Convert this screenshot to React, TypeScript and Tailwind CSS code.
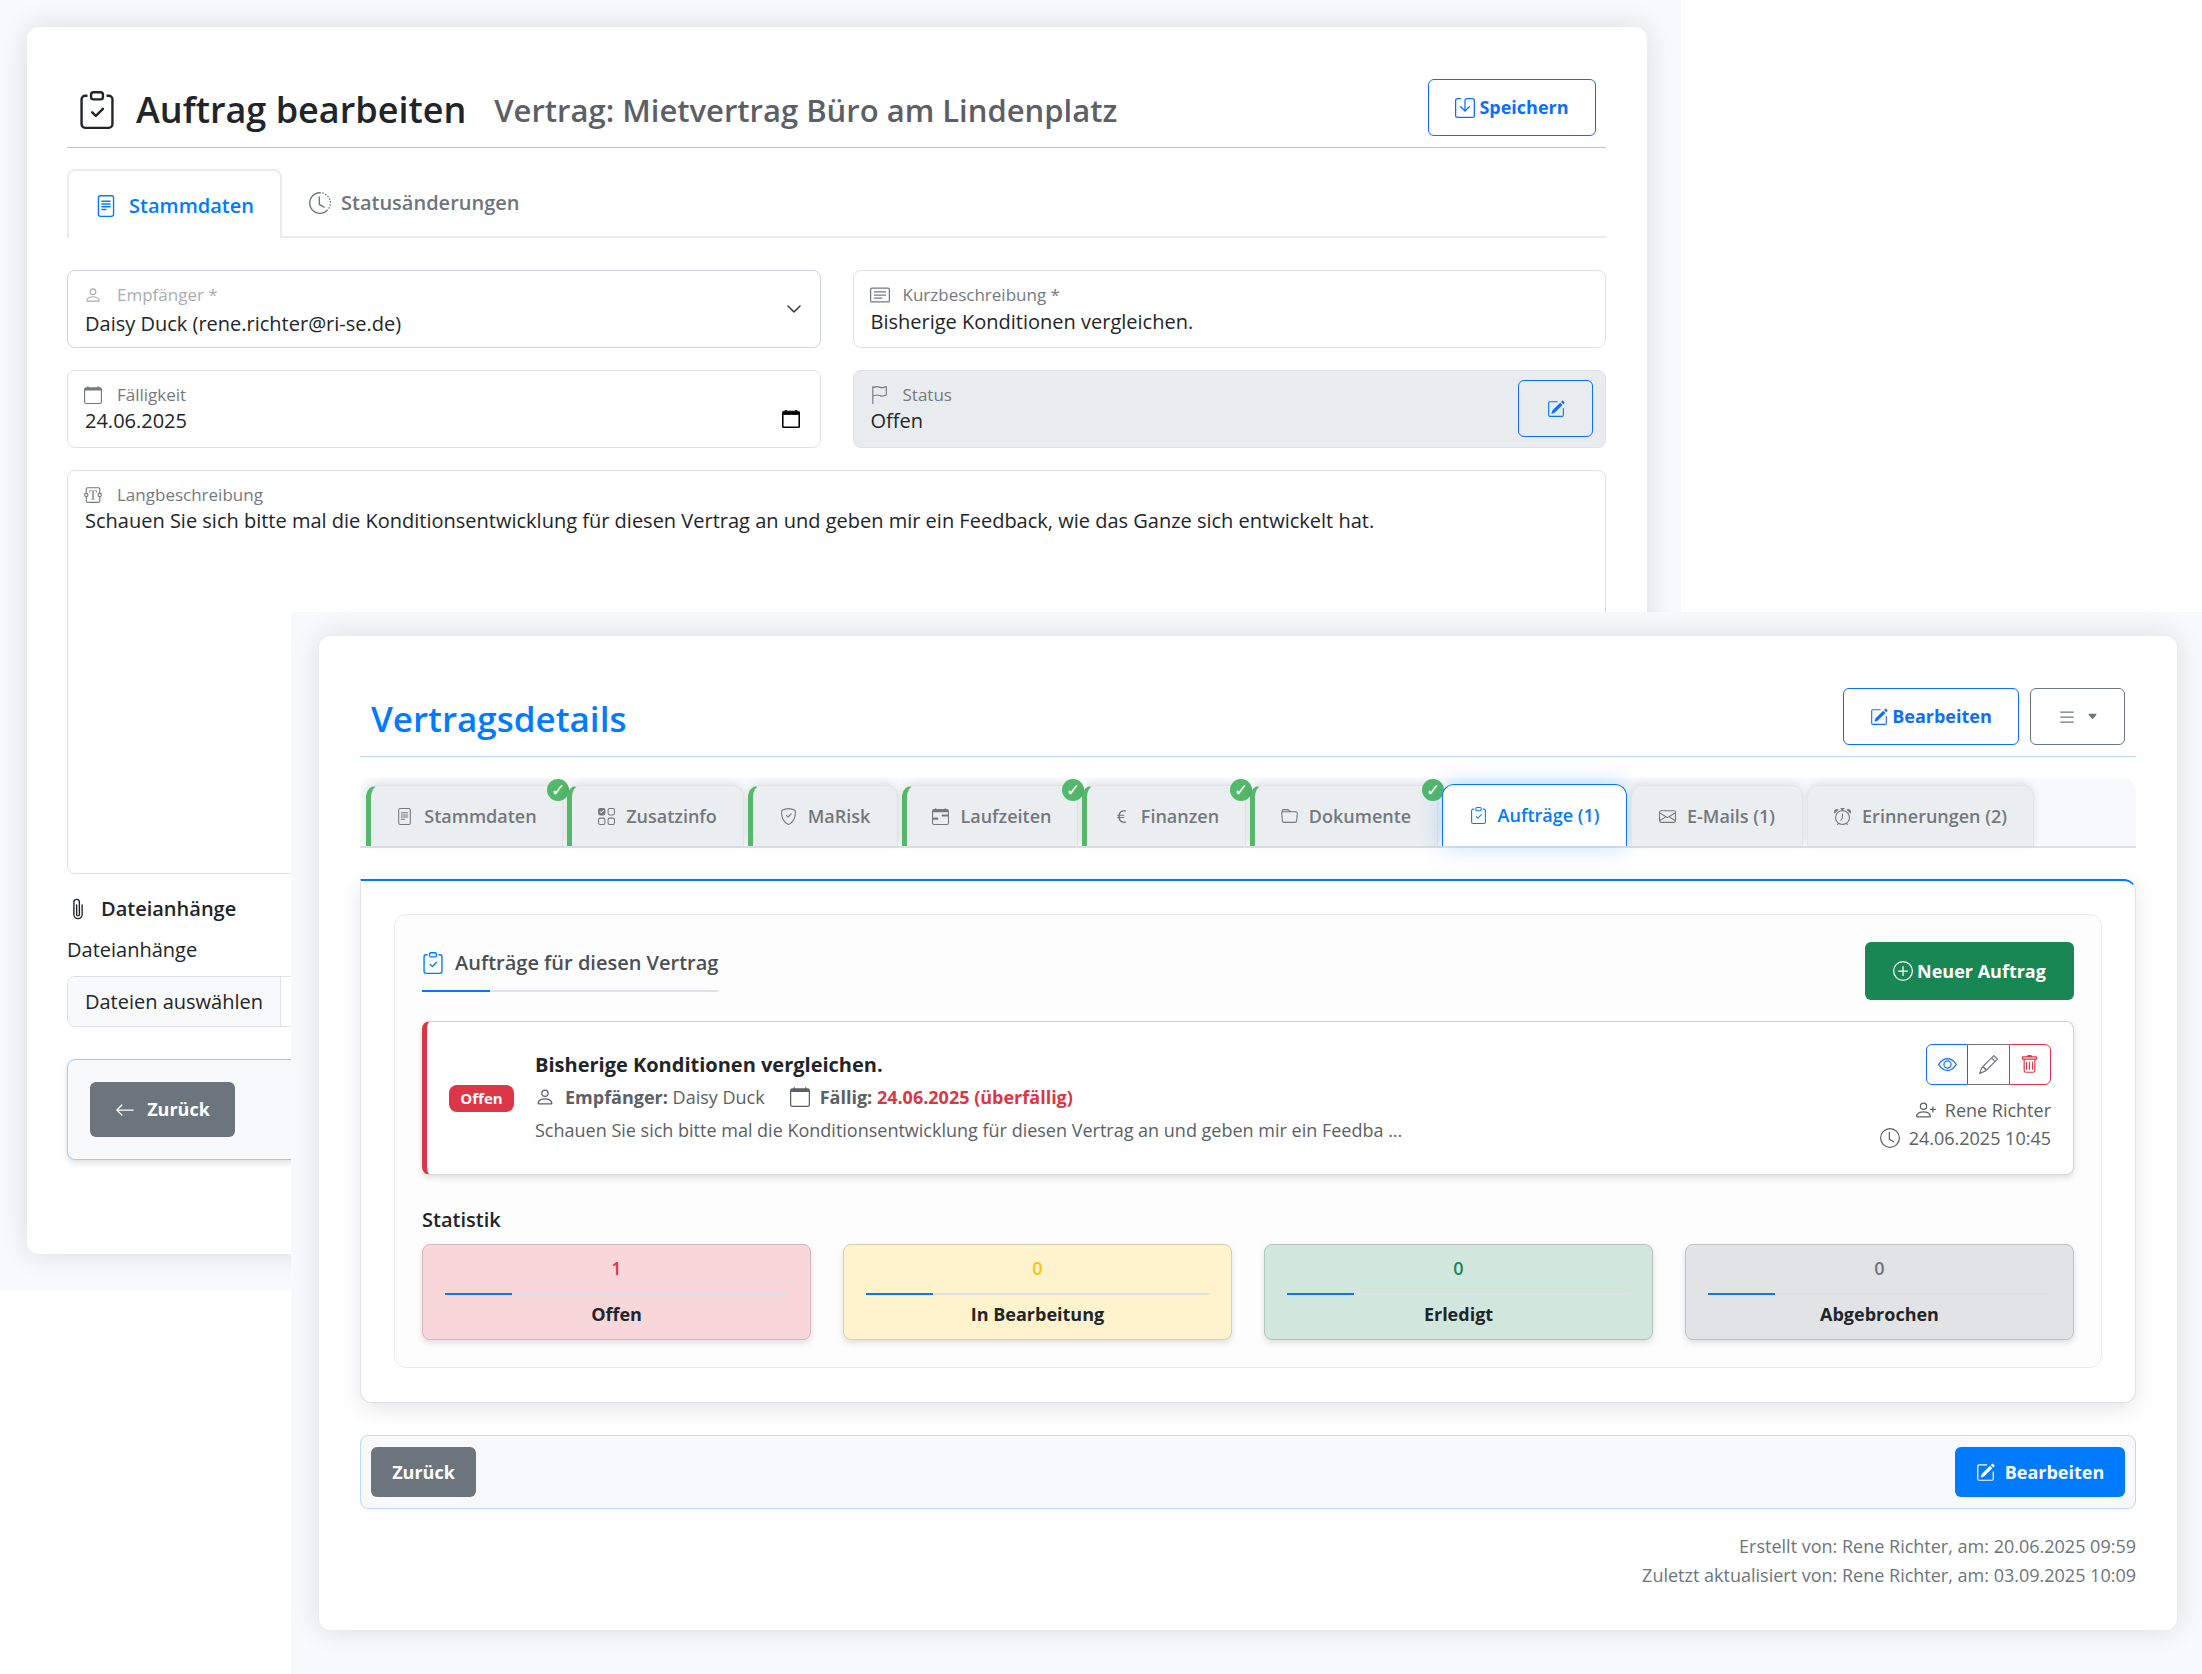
import type { ReactNode } from "react";
import {
  BsAlarm,
  BsArrowLeft,
  BsCalendar,
  BsCalendarRange,
  BsCardText,
  BsCaretDownFill,
  BsChevronDown,
  BsClipboardCheck,
  BsClock,
  BsClockHistory,
  BsCurrencyEuro,
  BsEnvelope,
  BsEye,
  BsFileText,
  BsFlag,
  BsFolder,
  BsList,
  BsPaperclip,
  BsPencil,
  BsPencilSquare,
  BsPerson,
  BsPersonPlus,
  BsPlusCircle,
  BsSave,
  BsShieldCheck,
  BsTextareaT,
  BsTrash,
  BsUiChecksGrid,
} from "react-icons/bs";

const labelText = "pointer-events-none absolute left-[17px] top-[13px] flex items-center gap-4 text-[17px] leading-6";

function OrderForm() {
  return (
    <section className="w-[1681px] max-w-full bg-[#f8f9fa] pt-[27px] pr-[34px] pb-9 pl-[27px]">
      <div className="h-[1227px] rounded-xl bg-white pt-[52px] pr-[41px] pl-10 shadow-[0_0_30px_rgba(0,0,0,0.12)]">
        <header className="flex items-start justify-between border-b border-[#a3c8fb] px-[10px] pb-[10px]">
          <div className="flex h-[58px] items-center pt-1 pl-px">
            <BsClipboardCheck className="mr-5 size-[38px]" />
            <h1 className="text-[36px] leading-10 font-semibold">Auftrag bearbeiten</h1>
            <p className="ml-7 text-[31px] leading-10 font-semibold text-[#5c6066]">Vertrag: Mietvertrag Büro am Lindenplatz</p>
          </div>
          <button className="flex h-[57px] w-[168px] items-center justify-center gap-1 rounded-md border border-[#0d6efd] text-[18px] font-bold text-[#0d6efd]">
            <BsSave className="size-5" />
            Speichern
          </button>
        </header>

        <nav className="mt-[21px] flex h-[69px]">
          <button className="flex w-[215px] items-center justify-center gap-3 rounded-t-lg border-2 border-b-0 border-[#e9ecef] pt-0.5 text-[20px] font-semibold text-[#007bff]">
            <BsFileText className="size-[22px]" />
            Stammdaten
          </button>
          <button className="flex flex-1 items-center gap-[10px] border-b-2 border-[#e9ecef] pl-[27px] text-[20px] font-semibold text-[#6c757d]">
            <BsClockHistory className="size-[22px]" />
            Statusänderungen
          </button>
        </nav>

        <div className="mt-8 grid grid-cols-2 gap-x-8 gap-y-[22px]">
          <div className="relative">
            <label htmlFor="empfaenger" className={`${labelText} text-[#a9adb1]`}>
              <BsPerson className="size-[18px] -mr-px" />
              Empfänger *
            </label>
            <select id="empfaenger" className="h-[78px] w-full appearance-none rounded-lg border border-[#ced4da] bg-white px-[17px] pt-[30px] text-[20px] leading-6">
              <option>Daisy Duck (rene.richter@ri-se.de)</option>
            </select>
            <BsChevronDown className="pointer-events-none absolute top-[31px] right-[19px] size-4 stroke-[0.5]" />
          </div>
          <div className="relative">
            <label htmlFor="kurz" className={`${labelText} text-[#74797f]`}>
              <BsCardText className="size-5 -mr-[3px]" />
              Kurzbeschreibung *
            </label>
            <input id="kurz" defaultValue="Bisherige Konditionen vergleichen." className="h-[78px] w-full rounded-lg border border-[#dee2e6] px-[17px] pt-[25px] text-[20px]" />
          </div>
          <div className="relative">
            <label htmlFor="faellig" className={`${labelText} text-[#74797f]`}>
              <BsCalendar className="size-[18px] -mr-px" />
              Fälligkeit
            </label>
            <input id="faellig" defaultValue="24.06.2025" className="h-[78px] w-full rounded-lg border border-[#dee2e6] px-[17px] pt-[22px] text-[20px]" />
            <button aria-label="Kalender öffnen" className="absolute top-10 right-[21px] text-black">
              <BsCalendar className="size-[18px] stroke-[0.7]" />
            </button>
          </div>
          <div className="relative">
            <label htmlFor="status" className={`${labelText} text-[#74797f]`}>
              <BsFlag className="size-[18px] -mr-px" />
              Status
            </label>
            <input id="status" readOnly defaultValue="Offen" className="h-[78px] w-full rounded-lg border border-[#dee2e6] bg-[#e9ecef] px-[17px] pt-[22px] text-[20px]" />
            <button aria-label="Status bearbeiten" className="absolute top-[10px] right-[13px] flex h-[57px] w-[75px] items-center justify-center rounded-md border border-[#0d6efd] text-[#0d6efd]">
              <BsPencilSquare className="size-[18px]" />
            </button>
          </div>
        </div>

        <div className="relative mt-[22px]">
          <label htmlFor="lang" className={`${labelText} text-[#74797f]`}>
            <BsTextareaT className="size-[18px] -mr-px" />
            Langbeschreibung
          </label>
          <textarea
            id="lang"
            defaultValue="Schauen Sie sich bitte mal die Konditionsentwicklung für diesen Vertrag an und geben mir ein Feedback, wie das Ganze sich entwickelt hat."
            className="block h-[404px] w-full resize-none rounded-lg border border-[#dee2e6] px-[17px] pt-9 text-[20px] leading-7"
          />
        </div>

        <h2 className="mt-5 flex items-center gap-3 text-[20px] leading-[30px] font-semibold">
          <BsPaperclip className="size-[22px]" />
          Dateianhänge
        </h2>
        <label htmlFor="dateien" className="mt-[11px] block text-[20px] leading-[30px]">
          Dateianhänge
        </label>
        <div className="mt-[11px] flex h-[51px] overflow-hidden rounded-lg border border-[#dee2e6]">
          <input id="dateien" type="file" multiple className="sr-only" />
          <label htmlFor="dateien" className="flex w-[213px] items-center justify-center border-r border-[#dee2e6] bg-[#f8f9fa] text-[20px]">
            Dateien auswählen
          </label>
        </div>

        <footer className="mt-8 rounded-lg border border-[#a3c8fb] bg-[#f8f9fa] px-[22px] py-[22px] shadow-[0_3px_6px_rgba(0,0,0,0.12)]">
          <button className="flex h-[55px] w-[145px] items-center justify-center gap-3 rounded-md bg-[#6c757d] text-[18px] font-bold text-white">
            <BsArrowLeft className="size-5" />
            Zurück
          </button>
        </footer>
      </div>
    </section>
  );
}

type Tab = { label: string; icon: ReactNode; width: string; done?: boolean; check?: boolean; active?: boolean };

const tabs: Tab[] = [
  { label: "Stammdaten", icon: <BsFileText />, width: "w-[197px]", done: true, check: true },
  { label: "Zusatzinfo", icon: <BsUiChecksGrid />, width: "w-[177px]", done: true },
  { label: "MaRisk", icon: <BsShieldCheck />, width: "w-[150px]", done: true },
  { label: "Laufzeiten", icon: <BsCalendarRange />, width: "w-[176px]", done: true, check: true },
  { label: "Finanzen", icon: <BsCurrencyEuro />, width: "w-[164px]", done: true, check: true },
  { label: "Dokumente", icon: <BsFolder />, width: "w-[188px]", done: true, check: true },
  { label: "Aufträge (1)", icon: <BsClipboardCheck />, width: "w-[185px]", active: true },
  { label: "E-Mails (1)", icon: <BsEnvelope />, width: "w-[172px]" },
  { label: "Erinnerungen (2)", icon: <BsAlarm />, width: "w-[227px]" },
];

function TabButton({ tab }: { tab: Tab }) {
  const base = "relative flex shrink-0 items-center justify-center gap-[11px] rounded-t-xl text-[18px] font-semibold";
  const look = tab.active
    ? "h-[62px] border border-b-0 border-[#007bff] bg-white text-[#007bff] shadow-[0_0_24px_rgba(0,123,255,0.25)]"
    : "h-[61px] border border-b-0 border-[#e2e5e9] bg-[#ebeef1] text-[#73787d] shadow-[0_-2px_8px_rgba(0,0,0,0.1)]";
  const side = tab.done ? "border-l-[5px] border-l-[#53b869]" : "";
  return (
    <button className={`${base} ${look} ${side} ${tab.width}`}>
      <span className="text-[17px]">{tab.icon}</span>
      {tab.label}
      {tab.check && (
        <span className="absolute -top-[7px] -right-[7px] flex size-[22px] items-center justify-center rounded-full bg-[#53b869] font-['DejaVu_Sans',sans-serif] text-[17px] leading-none font-bold text-white">
          ✓
        </span>
      )}
    </button>
  );
}

const stats = [
  { value: 1, label: "Offen", card: "bg-[#f8d7da] border-[#d3b7ba]", number: "text-[#dc3545]" },
  { value: 0, label: "In Bearbeitung", card: "bg-[#fff3cd] border-[#d9cfae]", number: "text-[#ffc107]" },
  { value: 0, label: "Erledigt", card: "bg-[#d1e7dd] border-[#b2c4bc]", number: "text-[#198754]" },
  { value: 0, label: "Abgebrochen", card: "bg-[#e2e3e5] border-[#c0c1c3]", number: "text-[#6c757d]" },
];

function TaskCard() {
  return (
    <article className="mt-[21px] flex h-[154px] items-center rounded-lg border border-l-[5px] border-[#d3d4d5] border-l-[#dc3545] bg-white px-[22px] shadow-[0_3px_6px_rgba(0,0,0,0.12)]">
      <span className="flex h-[27px] w-[65px] items-center justify-center rounded-lg bg-[#dc3545] text-[15px] font-bold text-white">Offen</span>
      <div className="ml-[21px] flex-1 pb-0.5 text-[18px] leading-[33px] text-[#5c6066]">
        <h3 className="text-[20px] font-bold text-[#212529]">Bisherige Konditionen vergleichen.</h3>
        <p className="flex items-center">
          <BsPerson className="mr-[10px] size-5" />
          <span>
            <b>Empfänger:</b> Daisy Duck
          </span>
          <BsCalendar className="mr-[10px] ml-[25px] size-5" />
          <b>
            Fällig: <span className="text-[#dc3545]">24.06.2025 (überfällig)</span>
          </b>
        </p>
        <p>Schauen Sie sich bitte mal die Konditionsentwicklung für diesen Vertrag an und geben mir ein Feedba ...</p>
      </div>
      <div className="flex flex-col items-end pb-px text-[18px] leading-7 text-[#5c6066]">
        <div className="mb-[11px] flex h-[41px] w-[125px]">
          <button aria-label="Ansehen" className="flex flex-1 items-center justify-center rounded-l-md border border-[#0d6efd] text-[#0d6efd]">
            <BsEye className="size-[19px]" />
          </button>
          <button aria-label="Bearbeiten" className="flex flex-1 items-center justify-center border-y border-[#6c757d] text-[#6c757d]">
            <BsPencil className="size-[19px]" />
          </button>
          <button aria-label="Löschen" className="flex flex-1 items-center justify-center rounded-r-md border border-[#dc3545] text-[#dc3545]">
            <BsTrash className="size-[19px]" />
          </button>
        </div>
        <p className="flex items-center gap-[9px]">
          <BsPersonPlus className="size-5" />
          Rene Richter
        </p>
        <p className="flex items-center gap-[9px]">
          <BsClock className="size-5" />
          24.06.2025 10:45
        </p>
      </div>
    </article>
  );
}

function ContractDetails() {
  return (
    <section className="absolute top-[612px] right-0 left-[291px] bg-[#f8f9fa] pt-6 pr-[25px] pb-[45px] pl-7">
      <div className="rounded-xl bg-white px-[41px] pt-[52px] pb-10 shadow-[0_0_30px_rgba(0,0,0,0.12)]">
        <header className="flex items-start justify-between border-b border-[#bcd8fb] px-[11px] pb-[11px]">
          <h1 className="pt-[7px] text-[35px] leading-[48px] font-semibold text-[#007bff]">Vertragsdetails</h1>
          <div className="flex gap-[11px]">
            <button className="flex h-[57px] w-[176px] items-center justify-center gap-1 rounded-md border border-[#0d6efd] text-[18px] font-bold text-[#0d6efd]">
              <BsPencilSquare className="size-[18px]" />
              Bearbeiten
            </button>
            <button aria-label="Menü" className="flex h-[57px] w-[95px] items-center justify-center gap-[10px] rounded-md border border-[#6c757d] text-[#6c757d]">
              <BsList className="size-5" />
              <BsCaretDownFill className="size-[11px]" />
            </button>
          </div>
        </header>

        <nav className="mt-[21px] flex h-[70px] items-end gap-1 rounded-t-xl border-b-2 border-[#dee2e6] bg-[#f8f9fa] pl-[6px]">
          {tabs.map((tab) => (
            <TabButton key={tab.label} tab={tab} />
          ))}
        </nav>

        <div className="mt-[31px] rounded-xl rounded-tl-none border border-t-2 border-[#dee2e6] border-t-[#007bff] bg-white px-[33px] pt-[33px] pb-[34px] shadow-[0_6px_22px_rgba(0,0,0,0.1)]">
          <div className="rounded-xl border border-[#e9ecef] bg-[#fdfdfd] p-[27px]">
            <div className="flex h-[58px] items-start justify-between">
              <h2 className="relative flex h-[50px] items-center gap-[11px] border-b-2 border-[#dee2e6] pb-[6px] text-[20px] font-semibold text-[#495057]">
                <BsClipboardCheck className="size-[22px] text-[#007bff]" />
                Aufträge für diesen Vertrag
                <span className="absolute -bottom-0.5 left-0 h-0.5 w-[68px] bg-[#007bff]" />
              </h2>
              <button className="flex h-[58px] w-[209px] items-center justify-center gap-1 rounded-md bg-[#198754] text-[18px] font-bold text-white">
                <BsPlusCircle className="size-5" />
                Neuer Auftrag
              </button>
            </div>
            <TaskCard />
            <h3 className="mt-[30px] text-[20px] leading-[30px] font-semibold">Statistik</h3>
            <div className="mt-[9px] grid grid-cols-4 gap-8">
              {stats.map((s) => (
                <div key={s.label} className={`h-24 rounded-lg border px-[22px] pt-[9px] text-center text-[18px] leading-7 shadow-[0_3px_6px_rgba(0,0,0,0.12)] ${s.card}`}>
                  <p className={`relative border-b-2 border-[#dee2e6] pb-[11px] font-semibold ${s.number}`}>
                    {s.value}
                    <span className="absolute -bottom-0.5 left-0 h-0.5 w-[67px] bg-[#007bff]" />
                  </p>
                  <p className="pt-[5px] font-bold">{s.label}</p>
                </div>
              ))}
            </div>
          </div>
        </div>

        <div className="mt-8 flex items-center justify-between rounded-lg border border-[#bcd8fb] bg-[#f8f9fa] px-[10px] py-[11px]">
          <button className="h-[50px] w-[105px] rounded-md bg-[#6c757d] text-[18px] font-bold text-white">Zurück</button>
          <button className="flex h-[50px] w-[170px] items-center justify-center gap-[10px] rounded-md bg-[#007bff] text-[18px] font-bold text-white">
            <BsPencilSquare className="size-[19px]" />
            Bearbeiten
          </button>
        </div>

        <div className="mt-[23px] text-right text-[18px] leading-[29px] text-[#6c757d]">
          <p>Erstellt von: Rene Richter, am: 20.06.2025 09:59</p>
          <p>Zuletzt aktualisiert von: Rene Richter, am: 03.09.2025 10:09</p>
        </div>
      </div>
    </section>
  );
}

export default function App() {
  return (
    <main className="relative min-h-screen bg-white font-['Open_Sans','Noto_Sans',sans-serif] text-[#212529]">
      <OrderForm />
      <ContractDetails />
    </main>
  );
}
